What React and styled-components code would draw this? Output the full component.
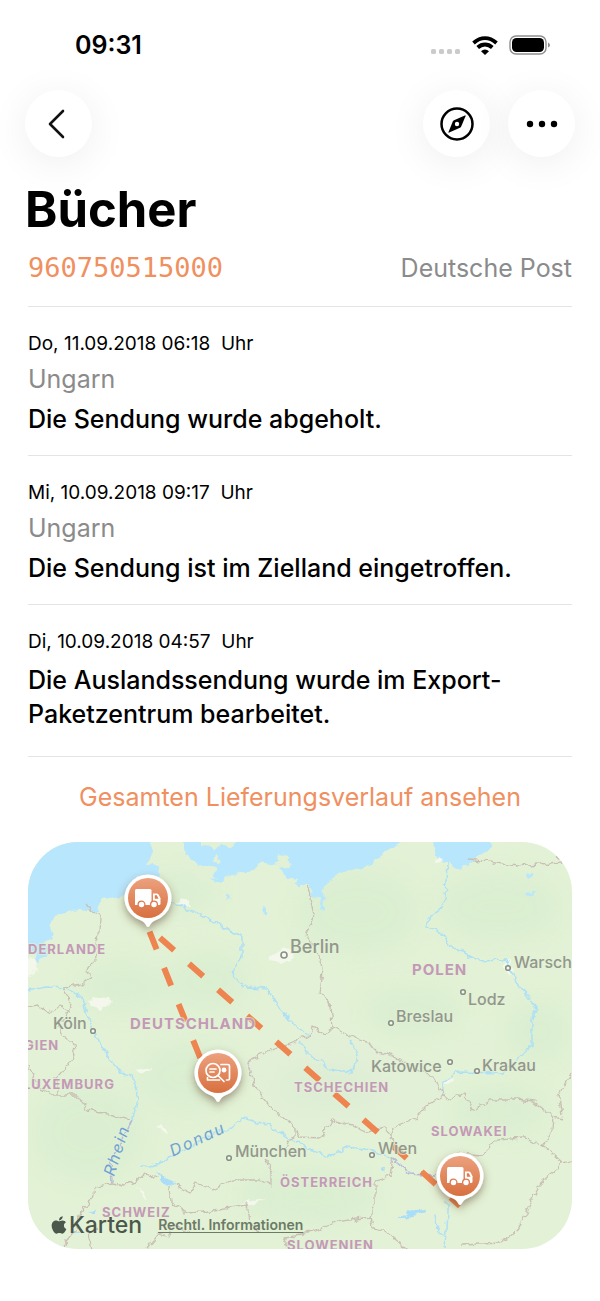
import styled, { createGlobalStyle } from 'styled-components';
import { FaApple } from 'react-icons/fa';

const GlobalStyle = createGlobalStyle`
  * {
    box-sizing: border-box;
  }

  body {
    margin: 0;
    background: #fff;
    color: #000;
    font-family: Inter, "Liberation Sans", sans-serif;
  }
`;

const accent = '#f0905f';
const muted = '#8b8b8c';

const Screen = styled.div`
  padding-bottom: 52px;
  overflow: hidden;
`;

const StatusBar = styled.div`
  display: flex;
  align-items: center;
  justify-content: space-between;
  height: 90px;
  padding: 0 49px 0 75px;
`;

const Time = styled.time`
  font-size: 25px;
  font-weight: 600;
  line-height: 32px;
`;

const StatusIcons = styled.div`
  display: flex;
  align-items: center;
  gap: 11px;

  svg {
    display: block;
  }
`;

const Toolbar = styled.nav`
  display: flex;
  gap: 18px;
  padding: 0 25px;
`;

const RoundButton = styled.button`
  display: grid;
  place-items: center;
  width: 67px;
  height: 67px;
  padding: 0;
  margin-right: ${(props) => (props.$push ? 'auto' : '0')};
  border: 0;
  border-radius: 50%;
  background: #fff;
  box-shadow: 0 6px 40px rgba(0, 0, 0, 0.07);
  cursor: pointer;
`;

const Content = styled.main`
  padding: 0 28px;
`;

const Title = styled.h1`
  margin: 23px 0 0 -3px;
  font-size: 49px;
  font-weight: 700;
  line-height: 60px;
`;

const Summary = styled.div`
  display: flex;
  align-items: center;
  justify-content: space-between;
  height: 67px;
  padding-bottom: 10px;
  border-bottom: 1px solid #e4e4e6;
`;

const TrackingNumber = styled.a`
  color: ${accent};
  font-family: "DejaVu Sans Mono", monospace;
  font-size: 27px;
  line-height: 34px;
  text-decoration: none;
`;

const Carrier = styled.span`
  color: ${muted};
  font-size: 25px;
  line-height: 34px;
`;

const Events = styled.ol`
  margin: 0;
  padding: 0;
  list-style: none;
`;

const Event = styled.li`
  display: flex;
  flex-direction: column;
  gap: ${(props) => (props.$plain ? '9px' : '6px')};
  padding: 25px 0 ${(props) => (props.$plain ? '25px' : '19px')};
  border-bottom: 1px solid #e4e4e6;
`;

const EventDate = styled.time`
  font-size: 19px;
  line-height: 24px;
  white-space: pre;
`;

const Place = styled.span`
  color: ${muted};
  font-size: 25px;
  line-height: 34px;
`;

const Message = styled.p`
  margin: 0;
  font-size: 25px;
  font-weight: 500;
  line-height: 34px;
`;

const HistoryButton = styled.button`
  display: block;
  width: 100%;
  height: 85px;
  padding: 0 0 5px;
  border: 0;
  background: none;
  color: ${accent};
  font-family: inherit;
  font-size: 25px;
  line-height: 34px;
  cursor: pointer;
`;

const MapCard = styled.section`
  position: relative;
  overflow: hidden;
  border-radius: 50px;
`;

const MapDrawing = styled.svg`
  display: block;
  width: 100%;
  height: auto;
`;

const Country = styled.text`
  fill: #c499b6;
  font-size: ${(props) => (props.$large ? '15px' : '13px')};
  font-weight: 700;
  letter-spacing: 1px;
`;

const City = styled.text`
  fill: #92978c;
  font-size: ${(props) => (props.$large ? '18px' : '16px')};
  font-weight: 500;
`;

const River = styled.text`
  fill: #6da2d3;
  font-size: 16px;
  font-style: italic;
  letter-spacing: 2px;
  text-anchor: middle;
`;

const Attribution = styled.div`
  position: absolute;
  bottom: 10px;
  left: 21px;
  display: flex;
  align-items: center;
  gap: 16px;
  color: #4c574b;
`;

const MapBrand = styled.span`
  display: flex;
  align-items: center;
  font-size: 23px;
  font-weight: 500;
  line-height: 28px;
`;

const LegalLink = styled.a`
  color: #6c7a66;
  font-size: 14px;
  font-weight: 600;
  line-height: 16px;
  text-underline-offset: 2px;
`;

const events = [
  {
    date: 'Do, 11.09.2018 06:18  Uhr',
    place: 'Ungarn',
    message: 'Die Sendung wurde abgeholt.',
  },
  {
    date: 'Mi, 10.09.2018 09:17  Uhr',
    place: 'Ungarn',
    message: 'Die Sendung ist im Zielland eingetroffen.',
  },
  {
    date: 'Di, 10.09.2018 04:57  Uhr',
    message: 'Die Auslandssendung wurde im Export-Paketzentrum bearbeitet.',
  },
];

const seas = [
  'M-8 -8H122L125 10L120 21L132 26L128 40L112 34L104 50L95 55L72 58L70 71H64L59 67L44 69L30 73L21 83L25 96L17 100L19 113L10 120L5 108L-8 113Z',
  'M155 -8L155 10L160 13L165 21L179 25L189 37L181 36L194 43L202 33L225 28L232 20L249 23L259 35L270 37L268 43L280 43L285 51L281 53L292 57L294 71L297 67L295 49L299 41L315 30L342 23L355 10L372 2L386 -8Z',
  'M405 -8L409 20L424 21L428 26L436 25L445 18L456 12L464 5L460 -8Z',
  'M198 53l3-3l1 8l-4 1zM234 66l4 1v7l-3-1zM499 32l5-2l2 4l-5 2zM497 51l9-1l2 2l-8 2z',
];

const islands = [
  'M172 -8H211L205 6L192 3L186 6L172 3Z',
  'M187 13l6 4l-3 4l-5-1zM251 13l10 2l2 8l-5 5l-7-3l-5-4l6-2z',
  'M166 22L187 26L185 32L180 40L168 35Z',
];

const forests = [
  [96, 145, 46, 26],
  [180, 140, 40, 30],
  [330, 70, 60, 42],
  [470, 65, 62, 34],
  [385, 170, 50, 26],
  [60, 290, 55, 48],
  [160, 235, 50, 34],
  [300, 245, 54, 22],
  [280, 355, 70, 30],
  [470, 268, 48, 26],
  [150, 50, 38, 20],
  [510, 190, 34, 30],
];

const clearings = [
  'M60 158L80 155L84 161L72 167L64 164Z',
  'M245 112L258 105L266 111L264 119L252 122L240 118Z',
  'M150 60L158 56L164 65L154 66Z',
  'M-4 118L7 115L10 128L5 132L-4 138Z',
  'M474 124L480 118L486 128L480 133Z',
  'M105 228L124 225L112 233Z',
  'M128 283L136 286L141 292L134 290Z',
  'M108 345L121 356L116 355Z',
  'M208 365L225 358L238 356L222 364Z',
  'M407 18L413 15L414 21L409 22Z',
  'M414 240L426 236L421 243Z',
];

const borders = [
  'M57 62L64 71L73 75L72 88L67 101L68 118L59 128L62 136L52 143L35 146L43 160L38 175L30 185L35 193L44 200L47 213L40 223L29 235L30 251',
  'M0 165L9 163L20 171L32 164L41 168',
  'M0 223L4 231L10 245L25 253L50 253L59 268L69 270L84 273L102 278',
  'M84 341L67 345L65 358L55 366L47 388L35 403',
  'M84 341L96 343L107 340L117 331L130 336',
  'M142 345L144 361L159 371L174 370L192 368L219 363L222 380L232 390',
  'M147 343L162 351L169 341L185 348L205 338L232 338L244 345L244 330L237 318',
  'M257 308L259 300L267 295L267 286L244 266L227 245L219 220L239 210L262 201L282 193L284 184L297 193L305 185L319 193L342 201L349 210L362 213L379 221L405 235L415 253',
  'M415 253L402 261L387 276L365 286L362 298',
  'M267 286L272 295L292 296L305 278L325 283L339 290L357 285L365 298L372 310',
  'M415 253L424 258L435 250L445 268L462 258L489 258L505 260L525 275L535 277',
  'M544 231L530 253L534 273',
  'M525 275L524 288L515 303L495 296L469 298L454 313L429 311',
  'M515 303L535 321L544 318',
  'M535 321L515 338L502 361L489 390L472 401L435 403',
  'M365 315L362 333L347 341L347 361L342 375L309 380L285 390L255 395L262 407',
  'M342 375L344 386L358 390L372 401L378 407',
  'M279 43L286 73L278 93L290 110L295 130L292 150L302 163L304 183L297 193',
  'M440 17L489 24L532 20L530 13',
  'M65 407L60 392L70 385M118 407L130 392L140 395L145 383L162 390',
];

const rivers = [
  'M120 57L145 60L165 71L172 71L195 85L214 96L214 116L204 131L215 145L239 146L252 168L272 188L282 193',
  'M272 201L285 216L305 228L325 230L329 211L322 198',
  'M419 21L417 56L412 70L402 73L397 85L412 90L424 105L450 119L477 118L490 143L509 166L504 180L504 203L489 216L475 231L429 230L415 241V253',
  'M0 148L19 145L39 146L55 156L62 180L72 201L92 231L105 233L110 258L104 278',
  'M112 325L122 325L132 321L145 313L160 306L192 288L200 288L215 276L239 283L269 300L299 315L319 305L345 308L365 318',
  'M419 358V370L417 407M407 374L411 390L418 396',
];

const lakes = [
  'M129 331L138 336L147 341L145 345L135 342Z',
  'M370 377L384 368L395 366L397 370L384 374Z',
  'M59 372L68 366L64 372ZM44 390L58 387L48 392ZM354 327L358 325L357 333Z',
];

const countries = [
  { name: 'DERLANDE', x: 0, y: 112 },
  { name: 'DEUTSCHLAND', x: 102, y: 187, large: true },
  { name: 'POLEN', x: 384, y: 133, large: true },
  { name: 'GIEN', x: -4, y: 208 },
  { name: 'LUXEMBURG', x: -5, y: 247 },
  { name: 'TSCHECHIEN', x: 266, y: 250 },
  { name: 'SLOWAKEI', x: 403, y: 294 },
  { name: 'ÖSTERREICH', x: 252, y: 345 },
  { name: 'SCHWEIZ', x: 74, y: 375 },
  { name: 'SLOWENIEN', x: 259, y: 408 },
];

const cities = [
  { name: 'Berlin', x: 262, y: 111, dot: [256, 113], large: true },
  { name: 'Köln', x: 25, y: 187, dot: [65, 189] },
  { name: 'Warsch', x: 486, y: 126, dot: [480, 126] },
  { name: 'Lodz', x: 440, y: 163, dot: [435, 150] },
  { name: 'Breslau', x: 368, y: 180, dot: [363, 181] },
  { name: 'Katowice', x: 343, y: 230, dot: [422, 220] },
  { name: 'Krakau', x: 454, y: 229, dot: [449, 229] },
  { name: 'München', x: 207, y: 315, dot: [201, 316] },
  { name: 'Wien', x: 350, y: 312, dot: [344, 313] },
];

const BackIcon = () => (
  <svg width="22" height="32" viewBox="0 0 22 32" fill="none" stroke="#111" strokeWidth="2.600" strokeLinecap="round" strokeLinejoin="round">
    <path d="M15 3L2 16L15 29" />
  </svg>
);

const CompassIcon = () => (
  <svg width="36" height="36" viewBox="0 0 36 36">
    <circle cx="18" cy="18" r="15.5" fill="none" stroke="#000" strokeWidth="2.5" />
    <path d="M25.9 9.400Q26.8 9.200 26.5 10.200L22.200 20.500Q21.800 21.400 21 21.800L10.200 26.600Q9.200 26.900 9.500 25.900L13.800 15.500Q14.200 14.600 15 14.200Z" />
    <circle cx="18" cy="18" r="2.2" fill="#fff" />
  </svg>
);

const MoreIcon = () => (
  <svg width="32" height="8" viewBox="0 0 32 8">
    <circle cx="4" cy="4" r="3.2" />
    <circle cx="16" cy="4" r="3.2" />
    <circle cx="28" cy="4" r="3.2" />
  </svg>
);

const SignalIcon = () => (
  <svg width="30" height="19" viewBox="0 0 30 19" fill="#cbcbcb">
    <rect x="0" y="13" width="5" height="5" rx="1.5" />
    <rect x="8" y="13" width="5" height="5" rx="1.5" />
    <rect x="16" y="13" width="5" height="5" rx="1.5" />
    <rect x="24" y="13" width="5" height="5" rx="1.5" />
  </svg>
);

const WifiIcon = () => (
  <svg width="26" height="19" viewBox="0 0 26 19" fill="none" stroke="#000" strokeWidth="3.8">
    <path d="M1.5 7Q7 2.100 13 2.100T24.500 7" />
    <path d="M5.700 11.500Q9 8.500 13 8.500T20.300 11.500" />
    <path d="M13 19L9 15.200Q10.800 13.400 13 13.400T17 15.200Z" fill="#000" stroke="none" />
  </svg>
);

const BatteryIcon = () => (
  <svg width="42" height="20" viewBox="0 0 42 20">
    <rect x="1" y="1" width="36" height="18" rx="6" fill="none" stroke="#8e8e8e" strokeWidth="1.400" />
    <rect x="3" y="3" width="32" height="14" rx="4.500" />
    <path d="M39 7.500Q41 8.500 41 10T39 12.500Z" fill="#8e8e8e" />
  </svg>
);

const TruckGlyph = () => (
  <g>
    <path d="M-11.500 -9H2Q3.500 -9 3.500 -7.500V7H-13V-7.500Q-13 -9 -11.500 -9Z" fill="#fff" />
    <path d="M5 -4.500H8.500Q10 -4.500 10.800 -3.300L12.500 .3V5.500Q12.500 7 11 7H5Z" fill="#fff" />
    <path d="M6.800 -2.800H8.800L10.600 .8H6.800Z" fill="#de7c50" />
    <circle cx="-6.500" cy="6.500" r="3.400" fill="#fff" stroke="#de7c50" strokeWidth="1.300" />
    <circle cx="6" cy="6.500" r="3.400" fill="#fff" stroke="#de7c50" strokeWidth="1.300" />
  </g>
);

const InspectGlyph = () => (
  <g fill="none" stroke="#fff" strokeWidth="1.700" strokeLinecap="round" strokeLinejoin="round">
    <circle cx="-5" cy="-2.500" r="7" />
    <path d="M-8 -4H-2M-8 -1H-4M0 2.500L6 8.500M3 -8.500H10Q11.500 -8.500 11.500 -7V5.500Q11.500 7 10 7H8.500M-10.500 4.500V7H1.500" />
    <circle cx="6" cy="-3" r="1.600" fill="#fff" />
  </g>
);

const Pin = ({ x, y, children }) => (
  <g transform={`translate(${x} ${y})`}>
    <path
      d="M-8 22A23.500 23.500 0 1 1 8 22Q3.500 23.500 1.500 28Q0 30 -1.500 28Q-3.500 23.500 -8 22Z"
      fill="#fff"
      filter="url(#pin-shadow)"
    />
    <circle r="20" fill="url(#pin-fill)" />
    {children}
  </g>
);

const RouteMap = () => (
  <MapDrawing viewBox="0 0 544 407" role="img" aria-label="Route der Sendung">
    <defs>
      <linearGradient id="pin-fill" x1="0" y1="0" x2="0" y2="1">
        <stop offset="0" stopColor="#eca17e" />
        <stop offset="1" stopColor="#d8703f" />
      </linearGradient>
      <filter id="pin-shadow" x="-50%" y="-50%" width="200%" height="200%">
        <feDropShadow dx="0" dy="4" stdDeviation="4" floodColor="#5a3a2a" floodOpacity="0.5" />
      </filter>
      <filter id="soft" x="-50%" y="-50%" width="200%" height="200%">
        <feGaussianBlur stdDeviation="12" />
      </filter>
      {/* breaks straight segments up into natural looking lines */}
      <filter id="rough" filterUnits="userSpaceOnUse" x="-10" y="-10" width="564" height="427" colorInterpolationFilters="sRGB">
        <feTurbulence type="fractalNoise" baseFrequency="0.13" numOctaves="2" seed="4" />
        <feDisplacementMap in="SourceGraphic" scale="8" xChannelSelector="R" yChannelSelector="G" />
      </filter>
    </defs>

    <rect width="544" height="407" fill="#e3f2d6" />
    <g fill="#d6ecce" opacity="0.6" filter="url(#soft)">
      {forests.map(([cx, cy, rx, ry]) => (
        <ellipse key={`${cx}-${cy}`} cx={cx} cy={cy} rx={rx} ry={ry} />
      ))}
    </g>
    <path d="M219 220L262 201L284 188L342 201L405 235L415 253L365 286L325 283L292 296L267 286L227 245Z" fill="#dfeed8" opacity="0.5" />
    <g filter="url(#rough)">
      {seas.map((d) => <path key={d} d={d} fill="#b8e6fc" />)}
      {islands.map((d) => <path key={d} d={d} fill="#e2f1d6" />)}
      {clearings.map((d) => <path key={d} d={d} fill="#f4f8ec" />)}
      {lakes.map((d) => <path key={d} d={d} fill="#aaddf8" />)}
    </g>
    <g fill="none" strokeLinejoin="round" filter="url(#rough)">
      <g stroke="#aee0f6" strokeWidth="1.500">
        {rivers.map((d) => <path key={d} d={d} />)}
      </g>
      <g stroke="#c9bfb5" strokeWidth="1.300">
        {borders.map((d) => <path key={d} d={d} />)}
      </g>
      <path d="M104 278L95 298L83 320L84 341M365 318L382 331L407 333" stroke="#b4b9d8" strokeWidth="1.500" />
    </g>

    <g stroke="#ee8450" strokeWidth="6" strokeDasharray="19 20">
      <path d="M120 86L190 260" strokeDashoffset="-4" />
      <path d="M120 85L432 364" strokeDashoffset="-16" />
    </g>

    <g stroke="#e3f1d8" strokeWidth="2" strokeOpacity="0.7" paintOrder="stroke" strokeLinejoin="round">
      {countries.map(({ name, x, y, large }) => (
        <Country key={name} x={x} y={y} $large={large}>{name}</Country>
      ))}
      {cities.map(({ name, x, y, large }) => (
        <City key={name} x={x} y={y} $large={large}>{name}</City>
      ))}
      <River transform="translate(94 310) rotate(-72)">Rhein</River>
      <River transform="translate(172 302) rotate(-25)">Donau</River>
    </g>
    <g fill="#f5f8ef" stroke="#8b9086" strokeWidth="1.600">
      {cities.map(({ name, dot, large }) => (
        <circle key={name} cx={dot[0]} cy={dot[1]} r={large ? 3 : 2.3} />
      ))}
    </g>

    <Pin x={120} y={56}><TruckGlyph /></Pin>
    <Pin x={190} y={231}><InspectGlyph /></Pin>
    <Pin x={432} y={334}><TruckGlyph /></Pin>
  </MapDrawing>
);

export default function App() {
  return (
    <Screen>
      <GlobalStyle />
      <StatusBar>
        <Time>09:31</Time>
        <StatusIcons>
          <SignalIcon />
          <WifiIcon />
          <BatteryIcon />
        </StatusIcons>
      </StatusBar>

      <Toolbar>
        <RoundButton type="button" aria-label="Zurück" $push><BackIcon /></RoundButton>
        <RoundButton type="button" aria-label="Im Browser öffnen"><CompassIcon /></RoundButton>
        <RoundButton type="button" aria-label="Mehr"><MoreIcon /></RoundButton>
      </Toolbar>

      <Content>
        <Title>Bücher</Title>
        <Summary>
          <TrackingNumber href="#sendung">960750515000</TrackingNumber>
          <Carrier>Deutsche Post</Carrier>
        </Summary>

        <Events>
          {events.map(({ date, place, message }) => (
            <Event key={date} $plain={!place}>
              <EventDate>{date}</EventDate>
              {place && <Place>{place}</Place>}
              <Message>{message}</Message>
            </Event>
          ))}
        </Events>

        <HistoryButton type="button">Gesamten Lieferungsverlauf ansehen</HistoryButton>

        <MapCard>
          <RouteMap />
          <Attribution>
            <MapBrand><FaApple size={20} />Karten</MapBrand>
            <LegalLink href="#rechtliches">Rechtl. Informationen</LegalLink>
          </Attribution>
        </MapCard>
      </Content>
    </Screen>
  );
}
